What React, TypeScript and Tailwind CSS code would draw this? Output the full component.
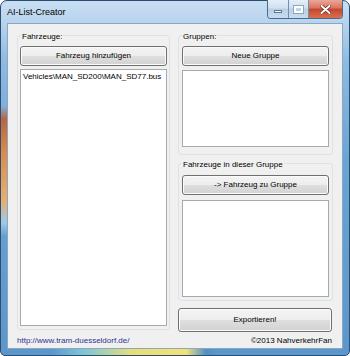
import React from 'react';

const btn =
  'w-full h-[20px] flex items-center justify-center rounded-[3px] border border-[#707070] bg-[linear-gradient(180deg,#f4f4f4_0%,#ededed_50%,#dfdfdf_50%,#d2d2d2_100%)] shadow-[inset_0_0_0_1px_#fbfbfb] text-[8px] leading-[10px] text-black';

const GroupBox: React.FC<{ label: string; className: string; children: React.ReactNode }> = ({ label, className, children }) => (
  <div className={`relative flex flex-col border border-[#dde2e6] rounded-[3px] ${className}`}>
    <span className="absolute top-[-4px] left-[3px] px-[1px] bg-[#f0f0f0] text-[8px] leading-[10px] text-black whitespace-nowrap">
      {label}
    </span>
    {children}
  </div>
);

const App: React.FC = () => {
  return (
    <div className="w-[350px] h-[356px] flex flex-col rounded-t-[7px] rounded-b-[5px] border border-[#2b4d6f] px-[6px] pb-[6px] font-['Liberation_Sans',Arial,sans-serif] bg-no-repeat bg-[linear-gradient(180deg,transparent_105px,#b9643f_118px,#d98a4a_150px,#e6b070_200px,#9ccbe6_222px,transparent_235px),linear-gradient(90deg,transparent_50px,#7cc3d8_80px,#e6de7a_130px,#f2e27a_185px,#4f8fc4_205px,transparent_215px),linear-gradient(180deg,#c9def2_0px,#b8d3ed_22px,#8dbbe2_60px,#6aa3d4_160px,#5b97cc_100%)] bg-[length:8px_100%,100%_8px,100%_100%] bg-[position:0_0,0_100%,0_0]">
      {/* Title bar */}
      <div className="h-[22px] flex items-start justify-between">
        <span className="mt-[6px] text-[9px] leading-[11px] text-black">AI-List-Creator</span>
        <div className="-mt-[1px] flex h-[19px] rounded-b-[4px] border border-t-0 border-[#4a6a8c] overflow-hidden">
          <div className="w-[21px] flex items-center justify-center border-r border-[#7290b0] bg-[linear-gradient(180deg,#e4eef8_0%,#cfe0f0_45%,#b8cfe6_50%,#cadcee_100%)]">
            <div className="w-[8px] h-[3px] mt-[5px] bg-white border border-[#5a7a9a]" />
          </div>
          <div className="w-[20px] flex items-center justify-center border-r border-[#7290b0] bg-[linear-gradient(180deg,#e4eef8_0%,#cfe0f0_45%,#b8cfe6_50%,#cadcee_100%)]">
            <div className="w-[9px] h-[7px] border-2 border-white outline outline-1 outline-[#8aa6c2]" />
          </div>
          <div className="w-[33px] flex items-center justify-center bg-[linear-gradient(180deg,#eaa797_0%,#d9745f_45%,#c7442c_50%,#d9704f_100%)]">
            <svg width="11" height="9" viewBox="0 0 11 9">
              <path d="M1.5 1 L9.5 8 M9.5 1 L1.5 8" stroke="#6b2418" strokeWidth="3.4" strokeLinecap="round" />
              <path d="M1.5 1 L9.5 8 M9.5 1 L1.5 8" stroke="#ffffff" strokeWidth="2" strokeLinecap="round" />
            </svg>
          </div>
        </div>
      </div>

      {/* Client area */}
      <div className="flex-1 bg-[#f0f0f0] border border-[#8ca7c4] flex pl-[9px] pt-[11px]">
        <div className="w-[153px] flex flex-col">
          <GroupBox label="Fahrzeuge:" className="h-[295px] pt-[10px] px-[2px] pb-[3px]">
            <button className={`${btn} border-[#3c7fb1] bg-[linear-gradient(180deg,#f1f5f8_0%,#e8eef3_50%,#d9e3eb_50%,#ccd8e2_100%)]`}>
              Fahrzeug hinzufügen
            </button>
            <div className="mt-[3px] flex-1 bg-white border border-[#a5a9b0] px-[2px] pt-[2px] text-[8px] leading-[10px] text-black whitespace-nowrap">
              Vehicles\MAN_SD200\MAN_SD77.bus
            </div>
          </GroupBox>
          <span className="mt-[6px] text-[8px] leading-[10px] text-[#2b3590]">http://www.tram-duesseldorf.de/</span>
        </div>

        <div className="ml-[8px] w-[155px] flex flex-col">
          <GroupBox label="Gruppen:" className="h-[120px] pt-[10px] px-[3px] pb-[7px]">
            <button className={btn}>Neue Gruppe</button>
            <div className="mt-[4px] flex-1 bg-white border border-[#a5a9b0]" />
          </GroupBox>
          <GroupBox label="Fahrzeuge in dieser Gruppe" className="mt-[8px] h-[138px] pt-[11px] px-[3px] pb-[3px]">
            <button className={btn}>-&gt; Fahrzeug zu Gruppe</button>
            <div className="mt-[5px] flex-1 bg-white border border-[#a5a9b0]" />
          </GroupBox>
          <button className={`${btn} mt-[7px] !h-[24px] !w-[154px]`}>Exportieren!</button>
          <span className="mt-[4px] w-[154px] text-right text-[8px] leading-[10px] text-black">©2013 NahverkehrFan</span>
        </div>
      </div>
    </div>
  );
};

export default App;
